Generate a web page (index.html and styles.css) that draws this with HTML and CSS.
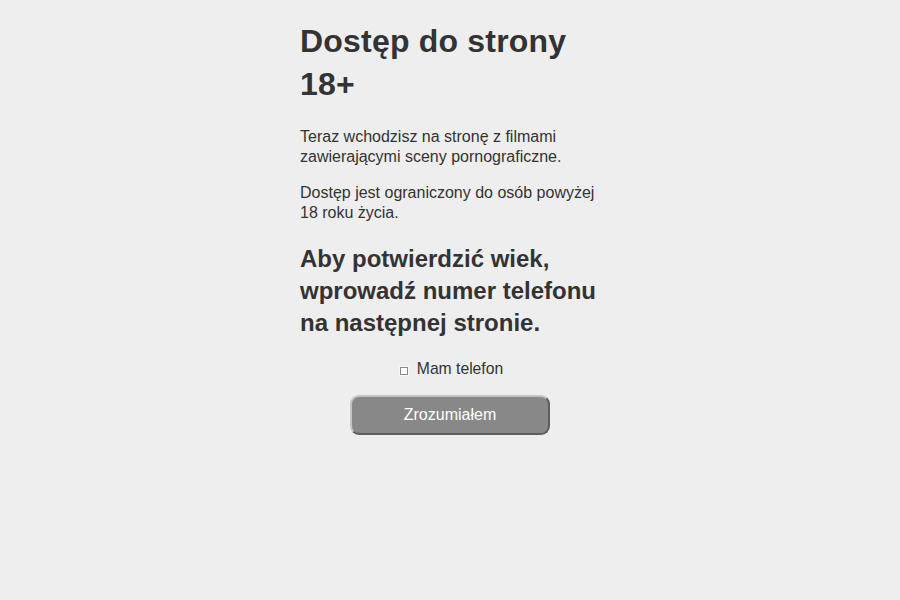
FILE: index.html
```html
<!DOCTYPE html>
<html lang="pl">
<head>
<meta charset="utf-8">
<title>Dostęp do strony 18+</title>
<link rel="stylesheet" href="styles.css">
</head>
<body>
<main class="page">
  <h1 class="title">Dostęp do strony 18+</h1>
  <p class="text">Teraz wchodzisz na stronę z filmami zawierającymi sceny pornograficzne.</p>
  <p class="text">Dostęp jest ograniczony do osób powyżej 18 roku życia.</p>
  <h2 class="subtitle">Aby potwierdzić wiek, wprowadź numer telefonu na następnej stronie.</h2>
  <label class="check">
    <span class="box"></span>
    <span class="check-label">Mam telefon</span>
  </label>
  <div class="actions">
    <button class="btn" type="button">Zrozumiałem</button>
  </div>
</main>
</body>
</html>
```

FILE: styles.css
```css
html, body {
  margin: 0;
  padding: 0;
  background: #eeeeee;
}
body {
  font-family: "Liberation Sans", Arial, sans-serif;
  color: #333333;
}
.page {
  width: 300px;
  margin: 0 auto;
  padding-top: 20px;
}
.title {
  margin: 0;
  font-size: 32px;
  line-height: 43px;
  font-weight: bold;
  letter-spacing: 0.2px;
}
.text {
  margin: 21px 0 0;
  font-size: 16px;
  line-height: 20px;
}
.text + .text {
  margin-top: 16px;
}
.subtitle {
  margin: 20px 0 0;
  font-size: 24px;
  line-height: 32px;
  font-weight: bold;
}
.check {
  margin-top: 20px;
  display: flex;
  justify-content: center;
  align-items: center;
  gap: 9px;
  font-size: 15.7px;
  line-height: 20px;
  padding-left: 3px;
}
.box {
  width: 6px;
  height: 6px;
  border: 1px solid #8a8a8a;
  background: #ffffff;
  box-shadow: 0 0 0 1px #f8f8f8;
  margin-top: 3px;
}
.actions {
  display: flex;
  justify-content: center;
  margin-top: 16px;
}
.btn {
  width: 200px;
  height: 40px;
  background: #888888;
  color: #ffffff;
  font-family: "Liberation Sans", Arial, sans-serif;
  font-size: 16px;
  border-radius: 9px;
  border: 2px solid;
  border-color: #c4c4c4 #5e5e5e #5e5e5e #c4c4c4;
  padding: 0;
}
```
